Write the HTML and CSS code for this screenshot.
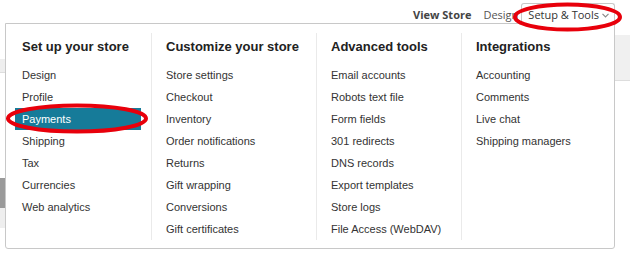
FILE: index.html
```html
<!DOCTYPE html>
<html lang="en">
<head>
    <meta charset="UTF-8">
    <meta name="viewport" content="width=device-width, initial-scale=1.0">
    <title>Setup &amp; Tools</title>
    <link rel="stylesheet" href="styles.css">
</head>
<body>
    <div class="topbar">
        <a class="top-link strong" href="#">View Store</a>
        <a class="top-link" href="#">Design</a>
        <div class="menu-tab">
            <span>Setup &amp; Tools</span>
            <svg class="chevron" width="7" height="5" viewBox="0 0 7 5"><polyline points="0.5,0.8 3.5,3.8 6.5,0.8" fill="none" stroke="#8a8a8a" stroke-width="1.2"/></svg>
        </div>
    </div>

    <div class="backdrop">
        <div class="side">
            <div class="side-tab"></div>
            <div class="side-block"></div>
            <div class="side-block light"></div>
        </div>
        <div class="main-band"></div>
    </div>

    <div class="dropdown">
        <div class="menu-col">
            <div class="menu-head">Set up your store</div>
            <a class="menu-item" href="#">Design</a>
            <a class="menu-item" href="#">Profile</a>
            <a class="menu-item active" href="#">Payments</a>
            <a class="menu-item" href="#">Shipping</a>
            <a class="menu-item" href="#">Tax</a>
            <a class="menu-item" href="#">Currencies</a>
            <a class="menu-item" href="#">Web analytics</a>
        </div>
        <div class="menu-col">
            <div class="menu-head">Customize your store</div>
            <a class="menu-item" href="#">Store settings</a>
            <a class="menu-item" href="#">Checkout</a>
            <a class="menu-item" href="#">Inventory</a>
            <a class="menu-item" href="#">Order notifications</a>
            <a class="menu-item" href="#">Returns</a>
            <a class="menu-item" href="#">Gift wrapping</a>
            <a class="menu-item" href="#">Conversions</a>
            <a class="menu-item" href="#">Gift certificates</a>
        </div>
        <div class="menu-col">
            <div class="menu-head">Advanced tools</div>
            <a class="menu-item" href="#">Email accounts</a>
            <a class="menu-item" href="#">Robots text file</a>
            <a class="menu-item" href="#">Form fields</a>
            <a class="menu-item" href="#">301 redirects</a>
            <a class="menu-item" href="#">DNS records</a>
            <a class="menu-item" href="#">Export templates</a>
            <a class="menu-item" href="#">Store logs</a>
            <a class="menu-item" href="#">File Access (WebDAV)</a>
        </div>
        <div class="menu-col">
            <div class="menu-head">Integrations</div>
            <a class="menu-item" href="#">Accounting</a>
            <a class="menu-item" href="#">Comments</a>
            <a class="menu-item" href="#">Live chat</a>
            <a class="menu-item" href="#">Shipping managers</a>
        </div>
    </div>

    <!-- red highlight marks drawn over the screenshot -->
    <svg class="marks" width="630" height="255" viewBox="0 0 630 255">
        <ellipse cx="77" cy="118.5" rx="69" ry="13" fill="none" stroke="#e8000b" stroke-width="4"/>
        <ellipse cx="567.5" cy="17" rx="52.5" ry="12.5" fill="none" stroke="#e8000b" stroke-width="4"/>
    </svg>
</body>
</html>
```

FILE: styles.css
```css
body {
    margin: 0;
    width: 630px;
    height: 255px;
    overflow: hidden;
    position: relative;
    background: #fff;
    font-family: "Liberation Sans", Arial, sans-serif;
}
a {
    text-decoration: none;
}
.topbar {
    height: 23px;
    display: flex;
    justify-content: flex-end;
    align-items: flex-end;
    padding-right: 15px;
    font-family: "Open Sans", "Liberation Sans", sans-serif;
    font-size: 11px;
    white-space: nowrap;
}
.top-link {
    color: #555;
    line-height: 15px;
    padding-bottom: 1px;
    margin-right: 3px;
}
.top-link.strong {
    color: #444;
    font-weight: bold;
    margin-right: 12px;
}
.menu-tab {
    position: relative;
    z-index: 2;
    height: 21px;
    margin-bottom: -1px;
    box-sizing: border-box;
    padding: 3px 5px 0 6px;
    border: 1px solid #c8c8c8;
    border-bottom: none;
    border-radius: 3px 3px 0 0;
    background: #fff;
    color: #333;
    line-height: 15px;
    display: flex;
    align-items: flex-start;
}
.chevron {
    margin-left: 3px;
    margin-top: 6px;
}
.backdrop {
    display: grid;
    grid-template-columns: 5px 1fr;
}
.side-tab {
    margin-top: 36px;
    height: 13px;
    background: #eee;
    border-bottom: 1px solid #ddd;
}
.side-block {
    margin-top: 105px;
    height: 30px;
    background: #9a9a9a;
}
.side-block.light {
    margin-top: 0;
    height: 20px;
    background: #eee;
}
.main-band {
    margin-top: 12px;
    height: 45px;
    background: #f0f0f0;
    border-bottom: 1px solid #ddd;
}
.dropdown {
    position: absolute;
    top: 23px;
    left: 5px;
    width: 610px;
    box-sizing: border-box;
    padding: 9px 0 8px;
    border: 1px solid #c8c8c8;
    border-radius: 0 0 3px 3px;
    background: #fff;
    display: grid;
    grid-template-columns: 145px 165px 145px 1fr;
}
.menu-col {
    display: flex;
    flex-direction: column;
    height: 207px;
    padding-left: 7px;
    border-left: 1px solid #eaeaea;
    white-space: nowrap;
}
.menu-col:first-child {
    padding-left: 9px;
    padding-right: 10px;
    border-left: none;
}
.menu-head {
    padding: 5px 7px 0;
    line-height: 18px;
    margin-bottom: 8px;
    font-size: 13px;
    font-weight: bold;
    color: #222;
}
.menu-item {
    padding: 0 7px;
    line-height: 22px;
    font-size: 11px;
    color: #333;
}
.menu-item.active {
    background: #167b99;
    color: #fff;
}
.marks {
    position: absolute;
    top: 0;
    left: 0;
    z-index: 5;
    pointer-events: none;
}
```
